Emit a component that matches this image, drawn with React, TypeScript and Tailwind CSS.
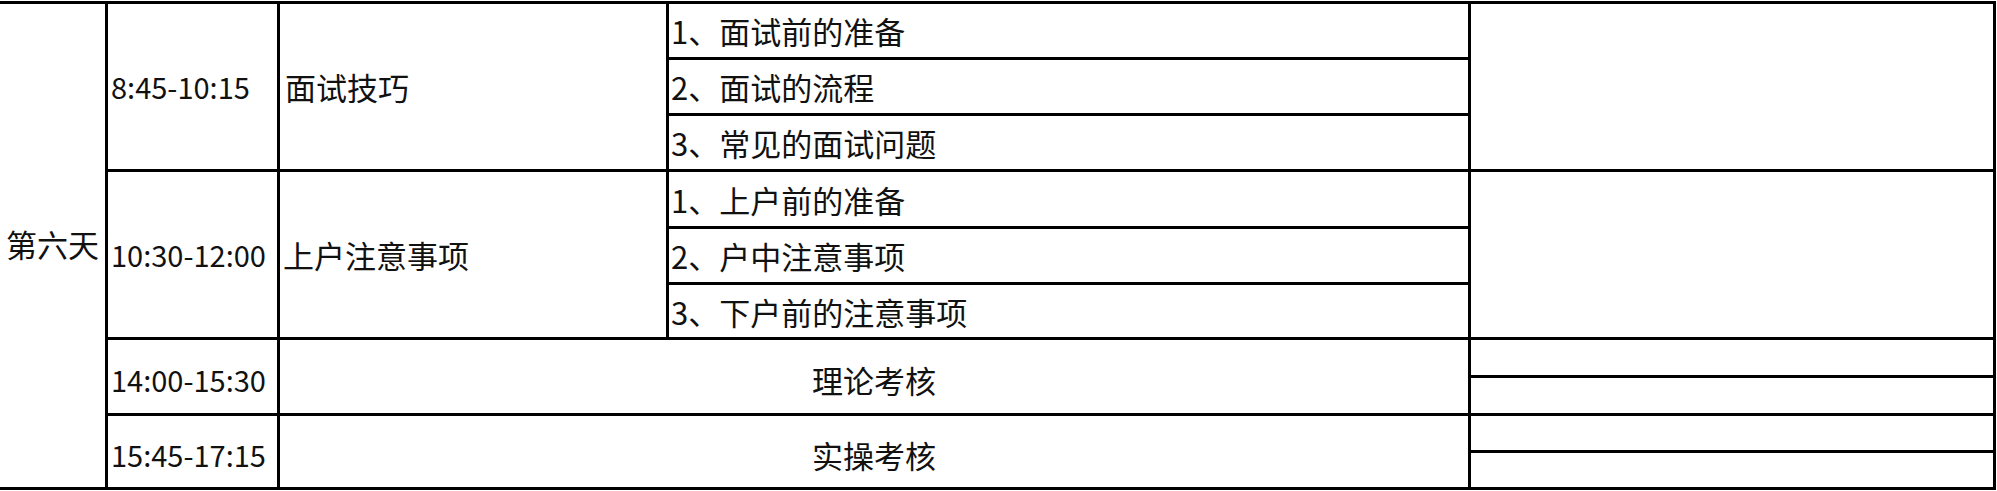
import React from 'react';

const cell = 'bg-white flex items-center whitespace-nowrap';

export default function App() {
  return (
    <div className="w-[1997px] h-[491px] bg-white overflow-hidden">
      <div
        className="mt-px grid bg-black pt-[3px] pb-[3px] pr-[3px] w-[1996px] text-[31px] leading-none text-[#111]"
        style={{
          fontFamily: '"Noto Sans CJK SC", "Noto Sans", sans-serif',
        }}
      >
        <div className="grid grid-cols-[105px_169px_386px_799px_522px] grid-rows-[53px_53px_53px_54px_53px_52px_35px_35px_34px_34px] gap-[3px] bg-black">
          {/* Day column */}
          <div className={`${cell} justify-center row-span-10 pb-[4px]`}>第六天</div>

          {/* Block 1 */}
          <div className={`${cell} row-span-3 pl-[3px] text-[29px]`}>8:45-10:15</div>
          <div className={`${cell} row-span-3 pl-[5px]`}>面试技巧</div>
          <div className={`${cell} pl-[2px]`}>1、面试前的准备</div>
          <div className={`${cell} row-span-3`}></div>
          <div className={`${cell} pl-[2px]`}>2、面试的流程</div>
          <div className={`${cell} pl-[2px]`}>3、常见的面试问题</div>

          {/* Block 2 */}
          <div className={`${cell} row-span-3 pl-[3px] text-[29px]`}>10:30-12:00</div>
          <div className={`${cell} row-span-3 pl-[3px]`}>上户注意事项</div>
          <div className={`${cell} pl-[2px]`}>1、上户前的准备</div>
          <div className={`${cell} row-span-3`}></div>
          <div className={`${cell} pl-[2px]`}>2、户中注意事项</div>
          <div className={`${cell} pl-[2px]`}>3、下户前的注意事项</div>

          {/* Exams */}
          <div className={`${cell} row-span-2 pl-[3px] pt-[6px] text-[29px]`}>14:00-15:30</div>
          <div className={`${cell} row-span-2 col-span-2 justify-center pt-[6px]`}>理论考核</div>
          <div className={cell}></div>
          <div className={cell}></div>

          <div className={`${cell} row-span-2 pl-[3px] pt-[6px] text-[29px]`}>15:45-17:15</div>
          <div className={`${cell} row-span-2 col-span-2 justify-center pt-[6px]`}>实操考核</div>
          <div className={cell}></div>
          <div className={cell}></div>
        </div>
      </div>
    </div>
  );
}
